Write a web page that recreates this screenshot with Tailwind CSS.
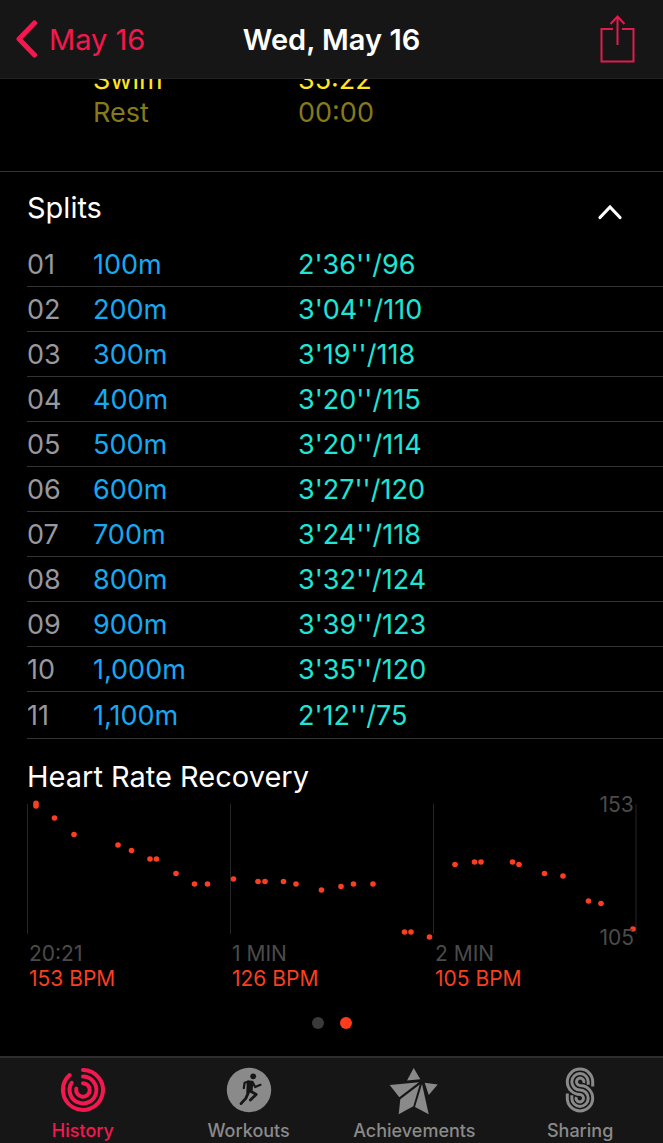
<!DOCTYPE html>
<html lang="en">

<head>
    <meta charset="UTF-8">
    <meta name="viewport" content="width=device-width, initial-scale=1.0">
    <title>Wed, May 16</title>
    <script src="https://cdn.jsdelivr.net/npm/@tailwindcss/browser@4"></script>
</head>

<body class="flex flex-col min-h-screen bg-black text-white font-['Inter',sans-serif] text-[27px] leading-[33px]">
    <!-- Header -->
    <header class="sticky top-0 z-10 grid grid-cols-[1fr_auto_1fr] items-center h-[79px] px-4 bg-[#161616] border-b border-[#222222] text-[29px]">
        <a href="#" class="flex items-center gap-3 justify-self-start text-[#f5184f]">
            <svg class="w-[21px] h-[38px]" viewBox="0 0 21 38" fill="none" stroke="currentColor" stroke-width="5" stroke-linecap="round" stroke-linejoin="round">
                <path d="M18.5 3 L3 19 L18.5 35" />
            </svg>
            May 16
        </a>
        <h1 class="font-semibold">Wed, May 16</h1>
        <button type="button" aria-label="Share" class="justify-self-end mr-3 text-[#e01b50]">
            <svg class="block w-[35px] h-[48px]" viewBox="0 0 35 48" fill="none" stroke="currentColor" stroke-width="2">
                <path d="M13 14 H1.5 V46.5 H33.5 V14 H22" />
                <path d="M17.5 30 V1.5 M10.5 9 L17.5 1.5 L24.5 9" />
            </svg>
        </button>
    </header>

    <main class="flex-1">
        <!-- Totals, scrolled under the header -->
        <dl class="grid grid-cols-[205px_1fr] -mt-4 pl-[93px] pb-[42px] border-b border-[#333333]">
            <dt class="text-[#ffe620]">Swim</dt>
            <dd class="text-[#ffe620]">35:22</dd>
            <dt class="text-[#857a1c]">Rest</dt>
            <dd class="text-[#857a1c]">00:00</dd>
        </dl>

        <!-- Splits -->
        <section class="pl-[27px]">
            <div class="flex items-center justify-between h-[69px] pt-0.5 pr-10">
                <h2 class="text-[29px]">Splits</h2>
                <button type="button" aria-label="Collapse splits" class="pt-2">
                    <svg class="block w-[26px] h-[16px]" viewBox="0 0 26 16" fill="none" stroke="currentColor" stroke-width="3.2" stroke-linecap="round">
                        <path d="M3 13.5 L13 3 L23 13.5" />
                    </svg>
                </button>
            </div>
            <table class="w-full table-fixed text-left">
                <colgroup>
                    <col class="w-[66px]">
                    <col class="w-[205px]">
                    <col>
                </colgroup>
                <tbody id="splits"></tbody>
            </table>
        </section>

        <!-- Heart rate recovery -->
        <section class="px-[27px] pt-[21px]">
            <h2 class="text-[29px]">Heart Rate Recovery</h2>
            <div class="relative mt-[7px]">
                <svg class="block w-full overflow-visible" viewBox="0 0 609 140" role="img" aria-label="Heart rate recovery chart">
                    <path d="M0.5 4 V134 M203.5 4 V134 M406.5 4 V134 M609 4 V134" stroke="#262626" />
                    <path d="M9 3.2 V6" stroke="#f93f20" stroke-width="5.6" stroke-linecap="round" />
                    <g id="points" fill="#f93f20"></g>
                </svg>
                <div class="absolute inset-y-0 right-[2px] flex flex-col justify-between -mt-2 -mb-[10px] text-[21px] leading-[25px] text-[#4b4b4b]">
                    <span>153</span>
                    <span>105</span>
                </div>
            </div>
            <div class="grid grid-cols-3 pt-px text-[21px] leading-[25px]">
                <div class="pl-[2px]">
                    <p class="text-[#4b4b4b]">20:21</p>
                    <p class="text-[#f93f20]">153 BPM</p>
                </div>
                <div class="pl-[2px]">
                    <p class="text-[#4b4b4b]">1 MIN</p>
                    <p class="text-[#f93f20]">126 BPM</p>
                </div>
                <div class="pl-[2px]">
                    <p class="text-[#4b4b4b]">2 MIN</p>
                    <p class="text-[#f93f20]">105 BPM</p>
                </div>
            </div>
            <div class="flex justify-center gap-4 mt-[26px]">
                <button type="button" aria-label="Page 1" class="size-3 rounded-full bg-[#3a3a3a]"></button>
                <button type="button" aria-label="Page 2" class="size-3 rounded-full bg-[#ff3b1d]"></button>
            </div>
        </section>
    </main>

    <!-- Tab bar -->
    <nav class="sticky bottom-0 grid grid-cols-4 h-[87px] pt-2 bg-[#161616] border-t-2 border-[#2e2e2e] text-[18px] leading-[22px] font-medium text-[#8a8a8a]">
        <a href="#" class="flex flex-col items-center gap-1.5 text-[#f5184f]">
            <svg class="size-12" viewBox="0 0 48 48" fill="none" stroke="currentColor" stroke-width="4" stroke-linecap="round">
                <path d="M24 4 A20 20 0 1 1 10.6 9.1" />
                <path d="M24 10.6 A13.4 13.4 0 1 1 12.7 16.8" />
                <path d="M24 17.2 A6.8 6.8 0 1 1 17.3 22.6" />
            </svg>
            History
        </a>
        <a href="#" class="flex flex-col items-center gap-1.5">
            <svg class="size-12" viewBox="0 0 48 48" fill="none">
                <circle cx="24" cy="24" r="22.2" fill="currentColor" />
                <circle cx="28.2" cy="10.3" r="2.9" fill="#161616" />
                <path d="M22.6 15.2 L27.6 15.6 L26.8 25 L22 26.6 Z" fill="#161616" stroke="#161616" stroke-width="1.5" stroke-linejoin="round" />
                <g stroke="#161616" stroke-linecap="round" stroke-linejoin="round">
                    <path d="M23.6 15.6 L19.6 16.8 L18.8 22.2" stroke-width="2.2" />
                    <path d="M27.6 16.4 L30.2 21 L35.4 18.8" stroke-width="2.2" />
                    <path d="M25.2 25 L31.2 28.4 L25.4 34" stroke-width="2.8" />
                    <path d="M23.4 26.6 L20.8 32.4 L16 37.6" stroke-width="2.8" />
                </g>
            </svg>
            Workouts
        </a>
        <a href="#" class="flex flex-col items-center gap-1.5">
            <svg class="size-12 overflow-visible" viewBox="0 0 48 48" fill="currentColor">
                <path d="M23.7 2 L30.3 13.3 L17 14.6 Z" />
                <path d="M-0.3 19 L29 16.3 L9.3 31.3 Z" />
                <path d="M34.7 16.7 L47.7 18.6 L38.7 29 Z" />
                <path d="M10.3 33.3 L29.7 18.6 L23.3 40.3 L8.7 48.3 Z" />
                <path d="M32 18 L38.7 48.3 L25 41 Z" />
            </svg>
            Achievements
        </a>
        <a href="#" class="flex flex-col items-center gap-1.5">
            <svg class="size-12" viewBox="0 0 48 48" fill="none" stroke="currentColor" stroke-width="3">
                <path d="M36.7 20.4 V15.8 A12.7 12.7 0 1 0 24 28.5 A3.7 3.7 0 1 1 20.3 31" />
                <path d="M32.2 18.8 V15.8 A8.2 8.2 0 1 0 24 24 A8.2 8.2 0 1 1 15.8 32.2 V29.2" />
                <path d="M27.7 17 A3.7 3.7 0 1 0 24 19.5 A12.7 12.7 0 1 1 11.3 32.2 V27.6" />
            </svg>
            Sharing
        </a>
    </nav>

    <script>
        const splits = [
            ['01', '100m', "2'36''/96"],
            ['02', '200m', "3'04''/110"],
            ['03', '300m', "3'19''/118"],
            ['04', '400m', "3'20''/115"],
            ['05', '500m', "3'20''/114"],
            ['06', '600m', "3'27''/120"],
            ['07', '700m', "3'24''/118"],
            ['08', '800m', "3'32''/124"],
            ['09', '900m', "3'39''/123"],
            ['10', '1,000m', "3'35''/120"],
            ['11', '1,100m', "2'12''/75"],
        ];

        // x, y inside the chart's viewBox
        const points = [
            [27.5, 18], [47, 34.5], [91, 45], [104.5, 50.5], [123, 59], [129.5, 59],
            [149, 73.5], [167.5, 84], [180.5, 84], [206.5, 79], [231, 81.5], [238, 81.5],
            [256.5, 81.5], [269, 84], [294.5, 90], [314, 86.5], [326.5, 84], [346, 84],
            [377.5, 132], [384, 132], [402.5, 137], [428, 64.5], [447.5, 62], [454, 62],
            [485.5, 62], [492, 64.5], [517.5, 73.5], [536, 76], [561.5, 101], [574, 103.5],
            [606, 129],
        ];

        document.getElementById('splits').innerHTML = splits.map(([number, distance, pace]) => `
            <tr class="h-[45px] last:h-[47px] border-b border-[#333333]">
                <th scope="row" class="pt-0.5 font-normal text-[#98989d]">${number}</th>
                <td class="pt-0.5 text-[#17a9f0]">${distance}</td>
                <td class="pt-0.5 text-[#1ee5d6]">${pace}</td>
            </tr>
        `).join('');

        document.getElementById('points').innerHTML = points.map(([x, y]) =>
            `<circle cx="${x}" cy="${y}" r="2.8" />`
        ).join('');
    </script>
</body>

</html>
